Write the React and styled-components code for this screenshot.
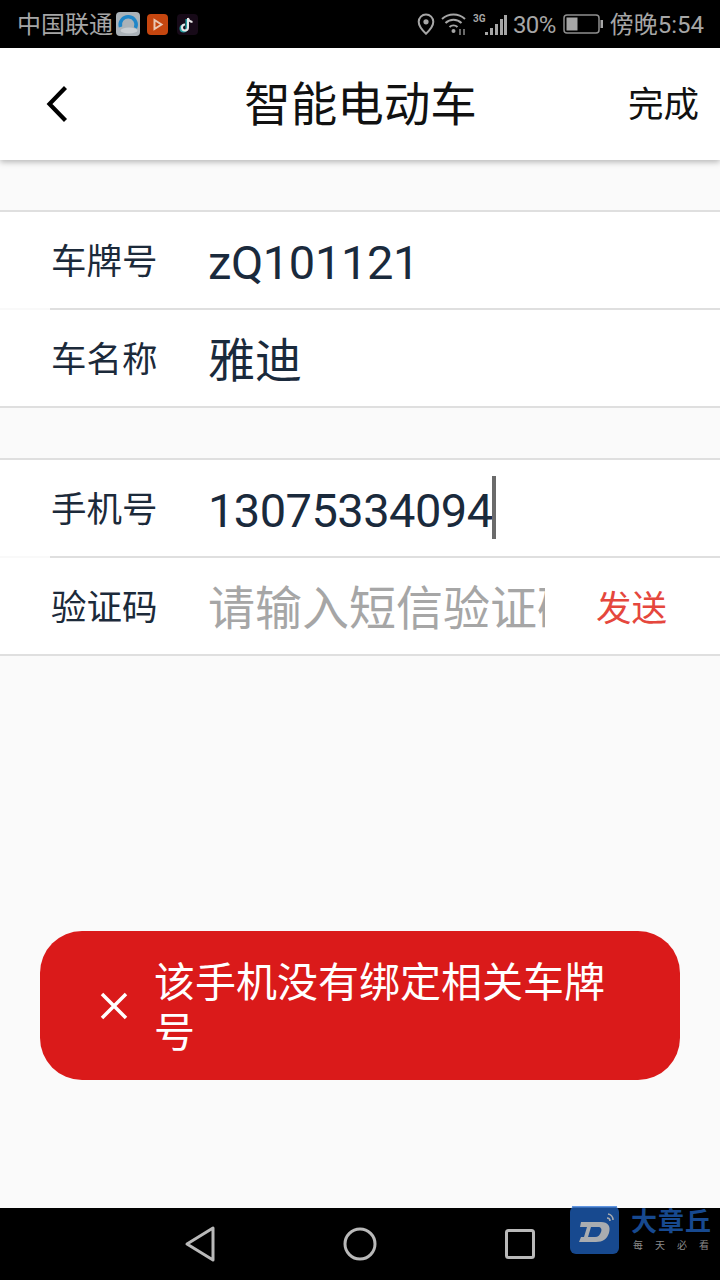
import React from "react";
import styled, { createGlobalStyle } from "styled-components";

const Global = createGlobalStyle`
  html, body { margin: 0; padding: 0; background: #fafafa; }
  * { box-sizing: border-box; }
  body { font-family: Roboto, "Noto Sans CJK SC", sans-serif; }
`;
const Page = styled.div`
  position: relative; width: 720px; height: 1280px; overflow: hidden;
  display: flex; flex-direction: column; background: #fafafa;
`;
const StatusBar = styled.div`
  height: 48px; flex: none; background: #000; color: #a6a6a6;
  display: flex; align-items: center; justify-content: space-between; padding: 0 16px 0 17px;
  font-size: 24px; line-height: 48px;
`;
const StatusSide = styled.div`display: flex; align-items: center;`;
const AppIcon = styled.svg`display: block; flex: none; margin-left: ${p => p.$ml || 0}px;`;
const StatusText = styled.span`margin-left: ${p => p.$ml || 0}px; padding-top: 2px;`;
const Percent = styled(StatusText)`letter-spacing: -0.6px;`;
const Header = styled.header`
  height: 112px; flex: none; background: #fff; position: relative; z-index: 1;
  box-shadow: 0 2px 6px rgba(0,0,0,.28);
  display: grid; grid-template-columns: 150px 1fr 150px; align-items: center;
`;
const Back = styled.svg`display: block; margin-left: 46px;`;
const Title = styled.h1`
  margin: 0; padding: 3px 0 0 1px; font-size: 46.5px; font-weight: 400; color: #111; text-align: center; line-height: 109px;
`;
const Done = styled.div`
  font-size: 35.5px; color: #111; text-align: right; padding: 3px 21px 0 0; line-height: 109px;
`;
const Group = styled.section`
  margin-top: ${p => p.$mt}px; background: #fff;
  border-top: 2px solid #dfdfdf; border-bottom: 2px solid #dfdfdf;
`;
const Row = styled.div`
  height: 96px; display: flex; align-items: center; padding: 5px 0 0 51px;
  & + & { height: 98px; position: relative; border-top: 2px solid #f9f9f9; }
  & + &::before {
    content: ""; position: absolute; left: 50px; right: 0; top: -2px; height: 2px; background: #dfdfdf;
  }
`;
const Label = styled.div`
  width: 157px; flex: none; font-size: 35.5px; color: #1c2a3a; line-height: 91px;
`;
const Value = styled.div`
  font-size: 47px; color: #1a2a3c; line-height: 91px; white-space: nowrap; display: flex; align-items: center;
  letter-spacing: ${p => p.$spacing || 0}px;
`;
const Caret = styled.span`
  display: block; width: 4px; height: 63px; background: #6b6b6b; margin: 0 0 6px -1px;
`;
const Placeholder = styled.div`
  width: 337px; flex: none; overflow: hidden; white-space: nowrap;
  font-size: 47px; color: #a6a6a6; line-height: 91px;
`;
const Send = styled.div`
  margin-left: 51px; padding-top: 1px; font-size: 35.5px; color: #e5473d; line-height: 91px;
`;
const Toast = styled.div`
  position: absolute; left: 40px; top: 931px; width: 640px; height: 149px; border-radius: 42px;
  background: #da1a1a; color: #fff; display: flex; align-items: center; padding: 0 70px 0 59px;
`;
const ToastIcon = styled.svg`display: block; flex: none; margin-right: 25px;`;
const ToastText = styled.div`font-size: 41px; line-height: 50px; padding-top: 4px;`;
const NavBar = styled.nav`
  position: absolute; left: 0; right: 0; bottom: 0; height: 72px; background: #000;
  display: flex; align-items: center; justify-content: center; gap: 112px;
`;
const Mark = styled.div`
  position: absolute; left: 570px; top: 1206px; width: 146px; height: 50px;
  display: flex; gap: 12px;
`;
const MarkLogo = styled.svg`display: block; flex: none;`;
const MarkText = styled.div`display: flex; flex-direction: column; width: 80px;`;
const MarkTitle = styled.div`
  font-size: 26px; line-height: 30px; font-weight: 700; color: #17498f; margin-top: 1px; letter-spacing: 1px; white-space: nowrap;
`;
const MarkSub = styled.div`
  display: flex; justify-content: space-between; padding: 0 2px; font-size: 10px; line-height: 14px; color: #8a8a8a; margin-top: 2px;
`;

export default function App() {
  return (
    <Page>
      <Global />
      <StatusBar>
        <StatusSide>
          <StatusText>中国联通</StatusText>
          <AppIcon $ml={3} width="24" height="24" viewBox="0 0 24 24">
            <rect width="24" height="24" rx="4" fill="#aab2b8" />
            <path d="M4.500 15a8 8 0 1 1 15 1" fill="none" stroke="#1f86c8" strokeWidth="3.500" />
            <circle cx="12" cy="12" r="4.500" fill="#aab2b8" />
            <ellipse cx="13" cy="18.500" rx="8.500" ry="3" fill="#c9ced2" />
          </AppIcon>
          <AppIcon $ml={7} width="21" height="21" viewBox="0 0 21 21">
            <rect width="21" height="21" rx="4" fill="#c5460f" />
            <path d="M7.500 6l7 4.500-7 4.500z" fill="none" stroke="#e9c8b4" strokeWidth="2" />
          </AppIcon>
          <AppIcon $ml={9} width="21" height="21" viewBox="0 0 21 21">
            <rect width="21" height="21" rx="4" fill="#170a18" />
            <path d="M9.500 5v9.500a3 3 0 1 1-3-3" fill="none" stroke="#2cc7c7" strokeWidth="2" opacity=".8" />
            <path d="M11 4v9.500a3 3 0 1 1-3-3M11 4c.5 2.500 2 3.700 4.500 4" fill="none" stroke="#e8e8e8" strokeWidth="2" />
          </AppIcon>
        </StatusSide>
        <StatusSide>
          <AppIcon width="18" height="24" viewBox="0 0 18 24">
            <path d="M9 2.500a7.300 7.300 0 0 0-7.300 7.300C1.700 15 9 21.700 9 21.700s7.300-6.700 7.300-11.900A7.300 7.300 0 0 0 9 2.500z" fill="none" stroke="#a6a6a6" strokeWidth="2" />
            <circle cx="9" cy="9.800" r="2.600" fill="#a6a6a6" />
          </AppIcon>
          <AppIcon $ml={6} width="26" height="24" viewBox="0 0 26 24">
            <g fill="none" stroke="#a6a6a6" strokeWidth="2">
              <path d="M1 7a17 17 0 0 1 23 0" />
              <path d="M4.500 11a11.500 11.500 0 0 1 16 0" />
              <path d="M8.500 15a6 6 0 0 1 8 0" />
            </g>
            <circle cx="12.500" cy="19" r="2" fill="#a6a6a6" />
            <path d="M19 17v6M23 17v6" stroke="#8a8a8a" strokeWidth="1.500" />
          </AppIcon>
          <AppIcon $ml={6} width="34" height="24" viewBox="0 0 34 24">
            <path d="M12 20h3v3h-3zM17 16h3v7h-3zM22 12h3v11h-3zM27 7h3v16h-3zM31 3h3v20h-3z" fill="#a6a6a6" />
            <text x="0" y="10" fontSize="10" fontWeight="700" fill="#a6a6a6" fontFamily="Roboto, sans-serif">3G</text>
          </AppIcon>
          <Percent $ml={6}>30%</Percent>
          <AppIcon $ml={7} width="40" height="22" viewBox="0 0 40 22">
            <rect x="1" y="2" width="35" height="18" rx="3" fill="none" stroke="#8f8f8f" strokeWidth="1.500" />
            <rect x="3.500" y="4.500" width="11" height="13" fill="#a6a6a6" />
            <rect x="37.500" y="7" width="2.500" height="8" fill="#a6a6a6" />
          </AppIcon>
          <StatusText $ml={7}>傍晚5:54</StatusText>
        </StatusSide>
      </StatusBar>
      <Header>
        <Back width="24" height="38" viewBox="0 0 24 38">
          <path d="M19.500 2.500L3.500 19l16 16.500" fill="none" stroke="#000" strokeWidth="4.200" />
        </Back>
        <Title>智能电动车</Title>
        <Done>完成</Done>
      </Header>
      <Group $mt={50}>
        <Row><Label>车牌号</Label><Value $spacing={-0.4}>zQ101121</Value></Row>
        <Row><Label>车名称</Label><Value>雅迪</Value></Row>
      </Group>
      <Group $mt={50}>
        <Row><Label>手机号</Label><Value $spacing={-0.55}>13075334094<Caret /></Value></Row>
        <Row><Label>验证码</Label><Placeholder>请输入短信验证码</Placeholder><Send>发送</Send></Row>
      </Group>
      <Toast>
        <ToastIcon width="30" height="30" viewBox="0 0 30 30">
          <path d="M3 3l24 24M27 3L3 27" stroke="#fff" strokeWidth="3.500" fill="none" />
        </ToastIcon>
        <ToastText>该手机没有绑定相关车牌号</ToastText>
      </Toast>
      <NavBar>
        <svg width="48" height="48" viewBox="0 0 48 48">
          <path d="M37 8v32L11 24z" fill="none" stroke="#b9b9b9" strokeWidth="3" strokeLinejoin="round" />
        </svg>
        <svg width="48" height="48" viewBox="0 0 48 48">
          <circle cx="24" cy="24" r="15" fill="none" stroke="#b9b9b9" strokeWidth="3" />
        </svg>
        <svg width="48" height="48" viewBox="0 0 48 48">
          <rect x="10.500" y="10.500" width="27" height="27" rx="2" fill="none" stroke="#b9b9b9" strokeWidth="3" />
        </svg>
      </NavBar>
      <Mark>
        <MarkLogo width="49" height="48" viewBox="0 0 49 48">
          <rect width="49" height="48" rx="6" fill="#17498f" />
          <path d="M2 0.700h45" stroke="#5f94e0" strokeWidth="1.400" />
          <path d="M11 16h20c7 0 10 4 8 11-2 6-6 9-13 9H9l2-5h3l3-10h-7z" fill="#a9acb0" />
          <path d="M21 21l-3 10h7c3 0 5-2 6-5s0-5-3-5z" fill="#17498f" />
          <path d="M38 8a6 6 0 0 1 5 6M37 12a3 3 0 0 1 3 3" fill="none" stroke="#a9acb0" strokeWidth="1.500" />
        </MarkLogo>
        <MarkText>
          <MarkTitle>大章丘</MarkTitle>
          <MarkSub><span>每</span><span>天</span><span>必</span><span>看</span></MarkSub>
        </MarkText>
      </Mark>
    </Page>
  );
}
